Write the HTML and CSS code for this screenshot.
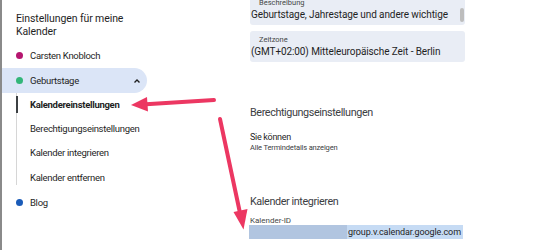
FILE: index.html
```html
<!DOCTYPE html>
<html lang="de">
<head>
<meta charset="utf-8">
<link rel="stylesheet" href="styles.css">
</head>
<body>
<div class="page">
  <nav class="nav">
    <div class="nav-title">Einstellungen für meine<br>Kalender</div>
    <div class="cal-row"><span class="dot dot-pink"></span><span>Carsten Knobloch</span></div>
    <div class="cal-row active"><span class="dot dot-green"></span><span class="grow">Geburtstage</span>
      <svg class="chev" width="10" height="10" viewBox="0 0 10 10"><path d="M2.5 6.5 L5 4 L7.5 6.5" fill="none" stroke="#1f1f1f" stroke-width="1.4"/></svg>
    </div>
    <div class="sub">
      <div class="sub-item current">Kalendereinstellungen</div>
      <div class="sub-item">Berechtigungseinstellungen</div>
      <div class="sub-item">Kalender integrieren</div>
      <div class="sub-item last">Kalender entfernen</div>
    </div>
    <div class="cal-row blog"><span class="dot dot-blue"></span><span>Blog</span></div>
  </nav>
  <main class="main">
    <div class="field first">
      <div class="label">Beschreibung</div>
      <div class="value">Geburtstage, Jahrestage und andere wichtige</div>
      <div class="scroll"></div>
    </div>
    <div class="field">
      <div class="label">Zeitzone</div>
      <div class="value">(GMT+02:00) Mitteleuropäische Zeit - Berlin</div>
    </div>
    <h2 class="heading perm">Berechtigungseinstellungen</h2>
    <div class="can">Sie können</div>
    <div class="can-sub">Alle Termindetails anzeigen</div>
    <h2 class="heading integ">Kalender integrieren</h2>
    <div class="id-label">Kalender-ID</div>
    <div class="id-row"><span class="redact"></span><span class="sel">group.v.calendar.google.com</span></div>
  </main>
  <svg class="arrows" width="557" height="250" viewBox="0 0 557 250">
    <line x1="214" y1="100" x2="146" y2="104.2" stroke="#ec3762" stroke-width="4" stroke-linecap="round"/>
    <polygon points="131,105 148,111.5 147,97" fill="#ec3762"/>
    <line x1="220" y1="119" x2="240" y2="213" stroke="#ec3762" stroke-width="4" stroke-linecap="round"/>
    <polygon points="243.5,229.5 233.5,212 247.5,209" fill="#ec3762"/>
  </svg>
</div>
</body>
</html>
```
FILE: styles.css
```css
html, body {
  margin: 0;
  padding: 0;
  background: #ffffff;
}
body {
  font-family: Roboto, "Liberation Sans", sans-serif;
  color: #1f1f1f;
  width: 557px;
  height: 250px;
  overflow: hidden;
}
.page {
  position: relative;
  display: flex;
  width: 557px;
  height: 250px;
  border-left: 2px solid #8a8a8a;
  box-sizing: border-box;
}
.nav {
  width: 248px;
  flex: none;
  display: flex;
  flex-direction: column;
}
.nav-title {
  font-size: 10.5px;
  letter-spacing: -0.1px;
  line-height: 13px;
  padding: 12px 0 0 14px;
  height: 31px;
  color: #1f1f1f;
}
.cal-row {
  display: flex;
  align-items: center;
  height: 25px;
  font-size: 9.5px;
  letter-spacing: -0.3px;
  padding-left: 13.5px;
  width: 145px;
  box-sizing: border-box;
  border-radius: 0 13px 13px 0;
}
.cal-row.active {
  background: #dbe5f7;
}
.cal-row.blog { margin-top: 5.5px; }
.grow { flex: 1; }
.chev { margin-right: 5px; }
.dot {
  width: 7px;
  height: 7px;
  border-radius: 50%;
  margin-right: 7.5px;
  flex: none;
}
.dot-pink { background: #b5166f; }
.dot-green { background: #33b679; }
.dot-blue { background: #1a5bb8; }
.sub {
  margin-left: 14px;
  border-left: 1px solid #d6d6d6;
  padding-top: 2px;
}
.sub-item {
  height: 24.5px;
  line-height: 24.5px;
  font-size: 9.5px;
  letter-spacing: -0.3px;
  padding-left: 13px;
  color: #1f1f1f;
}
.sub-item.last {
  height: 19px;
}
.sub-item.current {
  font-weight: 700;
  box-shadow: inset 2px 0 0 #3c4043;
  margin-left: -1px;
  padding-left: 14px;
  height: 17px;
  line-height: 17px;
  margin-top: 1px;
  margin-bottom: 3.5px;
}
.main {
  flex: 1;
  display: flex;
  flex-direction: column;
  align-items: flex-start;
}
.field {
  position: relative;
  width: 215px;
  height: 31px;
  box-sizing: border-box;
  background: #e9edf5;
  border-radius: 3px;
  padding-top: 5px;
  margin-bottom: 6px;
}
.field.first { margin-top: -6px; }
.label {
  font-size: 7.5px;
  line-height: 8px;
  color: #444746;
  padding-left: 9px;
}
.value {
  font-size: 10px;
  letter-spacing: -0.1px;
  line-height: 12px;
  margin-top: 2px;
  padding-left: 1px;
  color: #1f1f1f;
}
.scroll {
  position: absolute;
  right: 1px;
  top: 14px;
  width: 4px;
  height: 14px;
  border-radius: 2px;
  background: #bdbdbd;
}
.heading {
  font-size: 10.8px;
  letter-spacing: -0.4px;
  font-weight: 400;
  line-height: 14px;
  color: #3c4043;
  margin: 0;
}
.perm { margin-top: 38px; }
.can {
  font-size: 9px;
  letter-spacing: -0.3px;
  line-height: 12px;
  margin-top: 11px;
}
.can-sub {
  font-size: 7.5px;
  letter-spacing: -0.15px;
  line-height: 10px;
  color: #3c4043;
}
.integ { margin-top: 42px; }
.id-label {
  font-size: 8px;
  line-height: 9px;
  color: #444746;
  margin-top: 7px;
}
.id-row {
  display: flex;
  height: 14px;
  margin-left: -1px;
}
.redact {
  width: 98px;
  height: 14px;
  background: #b1c5e0;
}
.sel {
  font-size: 9px;
  letter-spacing: -0.1px;
  line-height: 14px;
  background: #c6dbf4;
  color: #1f1f1f;
  padding: 0 2px 0 1px;
}
.arrows {
  position: absolute;
  left: -2px;
  top: 0;
  pointer-events: none;
}
```
